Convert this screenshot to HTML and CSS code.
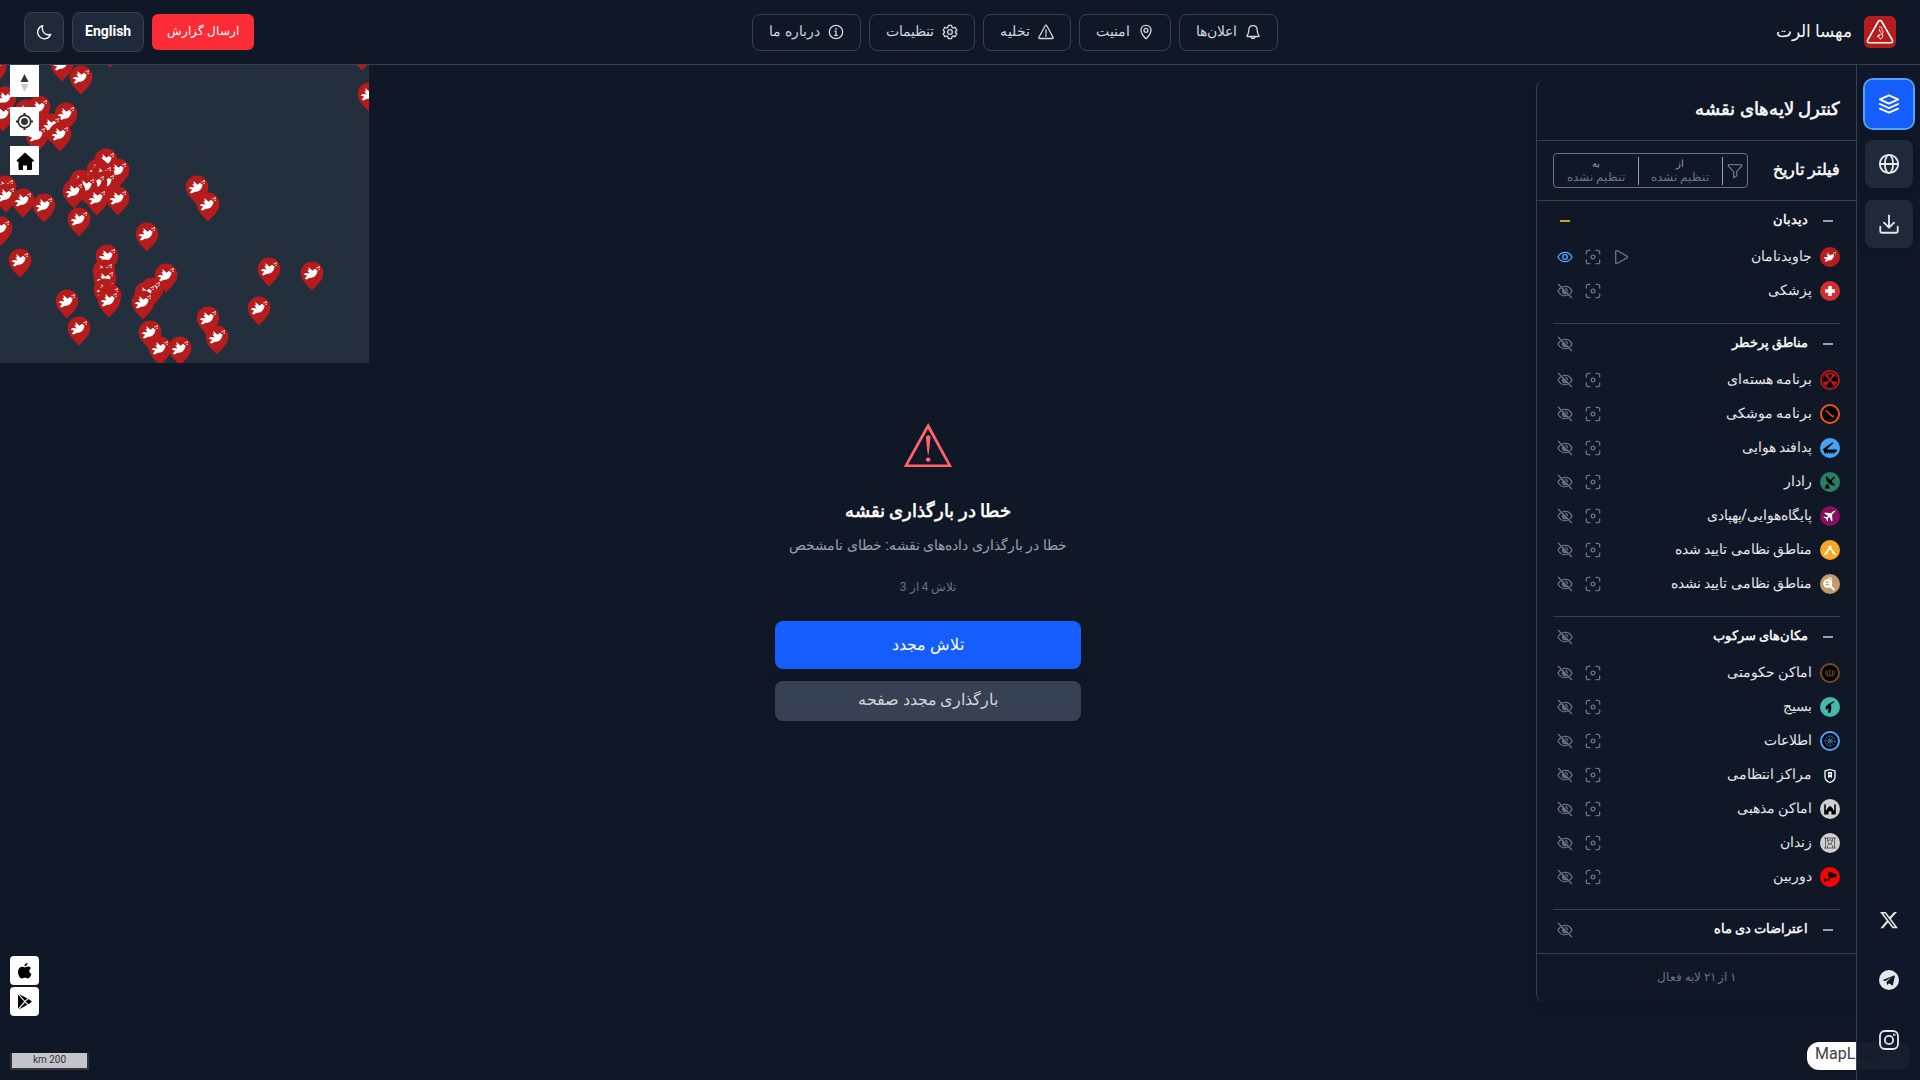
FILE: index.html
```html
<!DOCTYPE html>
<html lang="fa" dir="rtl">
<head>
<meta charset="utf-8">
<meta name="viewport" content="width=device-width, initial-scale=1">
<title>مهسا الرت</title>
<link rel="stylesheet" href="styles.css">
</head>
<body>
<svg class="sprite" aria-hidden="true">
  <symbol id="bell" viewBox="0 0 24 24"><path d="M12 2.500c-4 0-6.300 3-6.300 7 0 5-1.500 6-2.700 7.800-.5.700 0 1.400.8 1.400h16.400c.8 0 1.300-.7.8-1.400C19.800 15.500 18.300 14.500 18.300 9.500c0-4-2.300-7-6.300-7zM9 19c0 3.300 6 3.300 6 0"/></symbol>
  <symbol id="pin" viewBox="0 0 24 24"><path d="M12 2C7.500 2 4.500 5.200 4.500 9.200c0 5.300 5 10 6.700 12.400.4.500 1.200.5 1.600 0 1.700-2.400 6.700-7.100 6.700-12.400C19.500 5.200 16.500 2 12 2z"/><circle cx="12" cy="9.500" r="3"/></symbol>
  <symbol id="alert" viewBox="0 0 24 24"><path d="M10.800 2.600 1.400 19.800c-.5.900.1 2 1.200 2h18.800c1.100 0 1.700-1.100 1.200-2L13.200 2.600c-.5-1-1.900-1-2.400 0zM12 9v6M12 17v1.500"/></symbol>
  <symbol id="gear" viewBox="0 0 24 24"><path d="M9.600 2h4.800l.7 3 1.700 1 3-.9 2.500 4.300-2.300 2.300v.6l2.300 2.300-2.500 4.300-3-.9-1.700 1-.7 3H9.600l-.7-3-1.700-1-3 .9-2.500-4.300L4 12.300v-.6L1.700 9.400l2.500-4.300 3 .9 1.700-1z"/><circle cx="12" cy="12" r="3.500"/></symbol>
  <symbol id="info" viewBox="0 0 24 24"><circle cx="12" cy="12" r="10"/><path d="M10.500 10.800H12v6M10 17h4M12 6.700v1.200"/></symbol>
  <symbol id="moon" viewBox="0 0 24 24"><path d="M10 2.500A10 10 0 1 0 22 15.500C15 18 7.500 12.500 10 2.500z"/></symbol>
  <symbol id="layers" viewBox="0 0 24 24"><path d="m12 2.500 10 4.500-10 4.500L2 7zM2 12l10 4.500L22 12M2 17l10 4.500L22 17"/></symbol>
  <symbol id="globe" viewBox="0 0 24 24"><circle cx="12" cy="12" r="10"/><ellipse cx="12" cy="12" rx="4.500" ry="10"/><path d="M2 12h20"/></symbol>
  <symbol id="download" viewBox="0 0 24 24"><path d="M2.500 15v4.500a2 2 0 0 0 2 2h15a2 2 0 0 0 2-2V15M12 2.500v13M6.500 10.500l5.500 5.500 5.500-5.500"/></symbol>
  <symbol id="funnel" viewBox="0 0 24 24"><path d="M2 2.500h20v2l-7.500 8.500v6.500l-4.500 2.500v-9L2 4.500z"/></symbol>
  <symbol id="minus" viewBox="0 0 24 24"><path d="M4.500 12h15"/></symbol>
  <symbol id="eye" viewBox="0 0 24 24"><path d="M1.500 12c2.300-4.600 6-7 10.500-7s8.200 2.400 10.500 7c-2.300 4.600-6 7-10.500 7s-8.200-2.400-10.500-7z"/><circle cx="12" cy="12" r="3.500"/></symbol>
  <symbol id="eyeoff" viewBox="0 0 24 24"><path d="m2 2 20 20M9 5.400C15 4 20 6.500 22.500 12c-.8 1.600-1.700 3-2.900 4.100M6.300 7C4.200 8.200 2.600 10 1.500 12c3 6.300 9 8.500 15 6M8.500 10.500c-1.200 3.500 1.800 6.500 5.200 5.200zM13 8.300a4 4 0 0 1 2.800 3"/></symbol>
  <symbol id="focus" viewBox="0 0 24 24"><path d="M2 7.500V5a3 3 0 0 1 3-3h2.500M16.500 2H19a3 3 0 0 1 3 3v2.500M22 16.500V19a3 3 0 0 1-3 3h-2.500M7.500 22H5a3 3 0 0 1-3-3v-2.500"/><circle cx="12" cy="12" r="2.800"/></symbol>
  <symbol id="play" viewBox="0 0 24 24"><path d="M4 3.500v17c0 1.200 1 1.700 2 1.200l15-8.500c1-.6 1-1.800 0-2.400L6 2.300c-1-.5-2 0-2 1.200z"/></symbol>
  <g id="dove"><path fill="#fff" d="M2 14.500c1-1.700 2.500-2.300 4-2l3.500.5L6.500 9l2.200.5L8 5l5.200 4.800 3-2.500 1.800 1.500 1.500.5c-.8 5-3.500 8.700-8 9.200l-1.500 0-4.500 2-2-1 3-3.500c-1.500-.5-3-1-4.500-1.500zM18 5.200h1.800v1.300H18zM20.500 4h1.800v1.800h-1.800zM20.500 7.300h1.800v1.200h-1.800z"/></g>
  <g id="marker"><path fill="#b71c1c" d="M12 .5A11.300 11.300 0 0 0 .7 12C.7 19 7 24 12 29.500 17 24 23.300 19 23.300 12A11.300 11.300 0 0 0 12 .5z"/><use href="#dove" transform="translate(2 2) scale(.8)"/></g>
</svg>

<header class="topbar">
  <a class="brand" href="#">
    <svg class="logo" viewBox="0 0 32 32"><rect width="32" height="32" rx="6" fill="#b71c1c"/><path d="M14.300 5.500 3.700 24c-.8 1.500 0 2.800 1.500 2.800h21.600c1.500 0 2.300-1.300 1.500-2.800L17.700 5.500c-.8-1.400-2.600-1.400-3.400 0z" fill="none" stroke="#fff" stroke-width="1.600"/><path d="M15 11c2.500-.5 4 1 2.500 2.500 2.500 2 1.500 4-1 5s-2 3.500 0 4.500c2-1 3-3.500 1.500-6M15 13l1.500 3.500M13 21l2.500-3" fill="none" stroke="#fff" stroke-width="1"/></svg>
    <span>مهسا الرت</span>
  </a>
  <nav class="menu">
    <button class="menu-btn"><svg class="ico"><use href="#bell"/></svg><span>اعلان‌ها</span></button>
    <button class="menu-btn"><svg class="ico"><use href="#pin"/></svg><span>امنیت</span></button>
    <button class="menu-btn"><svg class="ico"><use href="#alert"/></svg><span>تخلیه</span></button>
    <button class="menu-btn"><svg class="ico"><use href="#gear"/></svg><span>تنظیمات</span></button>
    <button class="menu-btn"><svg class="ico"><use href="#info"/></svg><span>درباره ما</span></button>
  </nav>
  <div class="actions">
    <button class="report">ارسال گزارش</button>
    <button class="lang" lang="en">English</button>
    <button class="theme" aria-label="حالت تاریک"><svg class="ico"><use href="#moon"/></svg></button>
  </div>
</header>

<main class="layout">
  <aside class="rail">
    <button class="rail-btn active" aria-label="لایه‌ها"><svg class="ico"><use href="#layers"/></svg></button>
    <button class="rail-btn" aria-label="نقشه پایه"><svg class="ico"><use href="#globe"/></svg></button>
    <button class="rail-btn" aria-label="دانلود"><svg class="ico"><use href="#download"/></svg></button>
    <div class="social">
      <a href="#" aria-label="X"><svg viewBox="0 0 24 24"><path fill="currentColor" d="M18.200 2.300h3.400l-7.300 8.300 8.500 11.300h-6.700l-5.200-6.900-6 6.900H1.600l7.700-8.900L1.200 2.300H8l4.700 6.200zm-1.200 17.600h1.900L7.100 4.100h-2z"/></svg></a>
      <a href="#" aria-label="Telegram"><svg viewBox="0 0 24 24"><circle cx="12" cy="12" r="12" fill="currentColor"/><path fill="#101828" d="M4.500 12 18 6.500c.7-.2 1.200.2 1 1.200l-2.200 10.100c-.2.800-.7 1-1.300.6L12 15.900l-1.700 1.700c-.4.400-.7.300-.8-.3l-.4-3.200 6.400-5.800-7.900 5-3-.9c-.8-.2-.7-.8-.1-.4z"/></svg></a>
      <a href="#" aria-label="Instagram"><svg viewBox="0 0 24 24" fill="none" stroke="currentColor" stroke-width="2.200"><rect x="1.200" y="1.200" width="21.600" height="21.600" rx="6"/><circle cx="12" cy="12" r="5"/><circle cx="18.300" cy="5.700" r=".5"/></svg></a>
    </div>
  </aside>

  <section class="stage">
    <svg class="map" viewBox="0 0 369 298" aria-hidden="true">
      <rect width="369" height="298" fill="#242f3d"/>
      <use href="#marker" x="-17" y="-10"/><use href="#marker" x="50" y="-13"/><use href="#marker" x="98" y="-27"/><use href="#marker" x="350" y="-24"/><use href="#marker" x="357" y="17"/><use href="#marker" x="69" y="0"/>
      <use href="#marker" x="-7" y="21"/><use href="#marker" x="14" y="34"/><use href="#marker" x="-9" y="37"/><use href="#marker" x="27" y="30"/><use href="#marker" x="54" y="37"/><use href="#marker" x="39" y="48"/><use href="#marker" x="25" y="58"/><use href="#marker" x="48" y="57"/>
      <use href="#marker" x="94" y="83"/><use href="#marker" x="86" y="93"/><use href="#marker" x="106" y="93"/><use href="#marker" x="91" y="97"/><use href="#marker" x="69" y="104"/><use href="#marker" x="94" y="105"/><use href="#marker" x="84" y="106"/><use href="#marker" x="74" y="109"/><use href="#marker" x="62" y="114"/><use href="#marker" x="85" y="121"/><use href="#marker" x="106" y="121"/>
      <use href="#marker" x="-7" y="110"/><use href="#marker" x="-6" y="118"/><use href="#marker" x="11" y="123"/><use href="#marker" x="32" y="128"/><use href="#marker" x="67" y="142"/><use href="#marker" x="-11" y="151"/><use href="#marker" x="8" y="183"/>
      <use href="#marker" x="185" y="110"/><use href="#marker" x="196" y="127"/><use href="#marker" x="135" y="157"/>
      <use href="#marker" x="95" y="179"/><use href="#marker" x="92" y="194"/><use href="#marker" x="93" y="202"/><use href="#marker" x="93" y="213"/><use href="#marker" x="98" y="218"/><use href="#marker" x="97" y="223"/>
      <use href="#marker" x="154" y="198"/><use href="#marker" x="140" y="212"/><use href="#marker" x="134" y="216"/><use href="#marker" x="131" y="225"/><use href="#marker" x="55" y="224"/><use href="#marker" x="67" y="251"/>
      <use href="#marker" x="138" y="255"/><use href="#marker" x="148" y="271"/><use href="#marker" x="168" y="271"/><use href="#marker" x="196" y="241"/><use href="#marker" x="205" y="260"/><use href="#marker" x="247" y="231"/><use href="#marker" x="257" y="192"/><use href="#marker" x="300" y="196"/>
    </svg>

    <div class="controls">
      <button class="ctl ctl-compass" aria-label="شمال"><svg viewBox="0 0 29 29"><path fill="#333" d="m10.500 14 4-8 4 8z"/><path fill="#ccc" d="m10.500 16 4 8 4-8z"/></svg></button>
      <button class="ctl" aria-label="موقعیت من"><svg viewBox="0 0 29 29"><g fill="none" stroke="#333"><circle cx="14.500" cy="14.500" r="6.200" stroke-width="1.800"/><path stroke-width="2.200" d="M14.500 6v3M14.500 20v3M6 14.500h3M20 14.500h3"/></g><circle cx="14.500" cy="14.500" r="3.500" fill="#333"/></svg></button>
      <button class="ctl" aria-label="خانه"><svg viewBox="0 0 29 29"><path d="m15 6.500 9 8-1 1.300h-1V23a1 1 0 0 1-1 1h-4v-4.500h-4V24H9.500a1 1 0 0 1-1-1v-7.200h-1L6.500 14.500z"/></svg></button>
    </div>

    <div class="apps">
      <a href="#" class="ctl" aria-label="App Store"><svg viewBox="0 0 29 29"><path d="M17.500 7c.2 1.700-1.300 3.400-3 3.300-.2-1.600 1.400-3.200 3-3.300zM14.800 11.500c.7 0 1.800-1 3.400-.9 1.200 0 2.200.6 2.800 1.500-2.500 1.600-2 4.900.5 5.900-.6 1.900-2 4.500-3.600 4.500-1.200 0-1.700-.7-3-.7s-1.900.7-3 .7C9.800 22.500 8 18.800 8 16c0-3.200 2-5.200 4.100-5.200 1.200 0 2.200.7 2.700.7z"/></svg></a>
      <a href="#" class="ctl" aria-label="Google Play"><svg viewBox="0 0 29 29"><path d="m8 7.500 6.200 7L8 21.800zM9 7l8.500 4.500-2.600 2.300zM9 22.500l5.900-7 2.600 2.300zM18.500 12l3.500 2.600-3.500 2.700-3-2.700z"/></svg></a>
    </div>

    <div class="scale" dir="rtl">200 km</div>
    <div class="credit" dir="ltr">MapLibre</div>

    <div class="error" role="alert">
      <div class="error-icon">⚠</div>
      <h2>خطا در بارگذاری نقشه</h2>
      <p class="error-msg">خطا در بارگذاری داده‌های نقشه: خطای نامشخص</p>
      <p class="error-try">تلاش 4 از 3</p>
      <button class="retry">تلاش مجدد</button>
      <button class="reload">بارگذاری مجدد صفحه</button>
    </div>

    <section class="panel">
      <h2 class="panel-title">کنترل لایه‌های نقشه</h2>
      <div class="filter">
        <h3>فیلتر تاریخ</h3>
        <div class="range">
          <button class="range-icon" aria-label="فیلتر"><svg class="ico"><use href="#funnel"/></svg></button>
          <button class="range-date"><small>از</small><span>تنظیم نشده</span></button>
          <button class="range-date"><small>به</small><span>تنظیم نشده</span></button>
        </div>
      </div>

      <div class="list">
        <section class="group">
          <div class="group-head"><button class="tool" aria-label="بستن"><svg class="ico"><use href="#minus"/></svg></button><h3>دیدبان</h3><button class="tool partial" aria-label="نمایش"><svg class="ico"><use href="#minus"/></svg></button></div>
          <div class="row"><svg class="badge" viewBox="0 0 20 20"><circle cx="10" cy="10" r="10" fill="#b71c1c"/><use href="#dove" transform="translate(2.500 2.500) scale(.6)"/></svg><span>جاویدنامان</span><button class="tool" aria-label="پخش"><svg class="ico"><use href="#play"/></svg></button><button class="tool" aria-label="تمرکز"><svg class="ico"><use href="#focus"/></svg></button><button class="tool on" aria-label="نمایش"><svg class="ico"><use href="#eye"/></svg></button></div>
          <div class="row"><svg class="badge" viewBox="0 0 20 20"><circle cx="10" cy="10" r="10" fill="#d32f2f"/><path stroke="#fff" stroke-width="3.600" d="M10 5v10M5 10h10"/></svg><span>پزشکی</span><button class="tool" aria-label="تمرکز"><svg class="ico"><use href="#focus"/></svg></button><button class="tool" aria-label="نمایش"><svg class="ico"><use href="#eyeoff"/></svg></button></div>
        </section>

        <section class="group">
          <div class="group-head"><button class="tool" aria-label="بستن"><svg class="ico"><use href="#minus"/></svg></button><h3>مناطق پرخطر</h3><button class="tool" aria-label="نمایش"><svg class="ico"><use href="#eyeoff"/></svg></button></div>
          <div class="row"><svg class="badge" viewBox="0 0 20 20"><circle cx="10" cy="10" r="10" fill="#b71c1c"/><circle cx="10" cy="10" r="7.800" fill="none" stroke="#000" stroke-width=".8"/><path d="M8.600 9.200 4.600 5.600A7 7 0 0 0 3.500 12l5-1.200zM11.400 9.200l4-3.600a7 7 0 0 1 1.100 6.400l-5-1.200zM9.200 11.400 6.500 16a7 7 0 0 0 7 0l-2.700-4.600zM8 4.500l1.200 3.500h1.600L12 4.500z"/></svg><span>برنامه هسته‌ای</span><button class="tool" aria-label="تمرکز"><svg class="ico"><use href="#focus"/></svg></button><button class="tool" aria-label="نمایش"><svg class="ico"><use href="#eyeoff"/></svg></button></div>
          <div class="row"><svg class="badge" viewBox="0 0 20 20"><circle cx="10" cy="10" r="9" stroke="#f4511e" stroke-width="2"/><path stroke="#f4511e" stroke-width="1.400" d="m6 6.500 7 6.500M12 13.300l1.800-1.800"/></svg><span>برنامه موشکی</span><button class="tool" aria-label="تمرکز"><svg class="ico"><use href="#focus"/></svg></button><button class="tool" aria-label="نمایش"><svg class="ico"><use href="#eyeoff"/></svg></button></div>
          <div class="row"><svg class="badge" viewBox="0 0 20 20"><circle cx="10" cy="10" r="10" fill="#42a5f5"/><path d="m3 11 9.500-6.800.8 1L6.500 11.500H17l-.6 2.500H4z"/><path stroke="#000" stroke-dasharray="1.500 .7" stroke-width="1.600" d="M4.500 14.800h11"/></svg><span>پدافند هوایی</span><button class="tool" aria-label="تمرکز"><svg class="ico"><use href="#focus"/></svg></button><button class="tool" aria-label="نمایش"><svg class="ico"><use href="#eyeoff"/></svg></button></div>
          <div class="row"><svg class="badge" viewBox="0 0 20 20"><circle cx="10" cy="10" r="10" fill="#2a7f62"/><path d="M6.500 4c-2 4 3.500 10.500 9 9.500L11.500 9.300 15 5.200l-1-.8-3.700 3.700zM6.500 12 4.500 16.500h5L9 13z"/></svg><span>رادار</span><button class="tool" aria-label="تمرکز"><svg class="ico"><use href="#focus"/></svg></button><button class="tool" aria-label="نمایش"><svg class="ico"><use href="#eyeoff"/></svg></button></div>
          <div class="row"><svg class="badge" viewBox="0 0 20 20"><circle cx="10" cy="10" r="10" fill="#880e5f"/><path fill="#fff" d="M16 4.200 13 5.500 11 7.300 5 6.500 4.300 7.500 8 9.700l-1 1.200-3-.2-.6.8 2.800 1 .9 2.800.9-.5V12l1.500-1 2 4.500 1-.8-.5-6 1.800-2z"/></svg><span>پایگاه‌هوایی/پهپادی</span><button class="tool" aria-label="تمرکز"><svg class="ico"><use href="#focus"/></svg></button><button class="tool" aria-label="نمایش"><svg class="ico"><use href="#eyeoff"/></svg></button></div>
          <div class="row"><svg class="badge" viewBox="0 0 20 20"><circle cx="10" cy="10" r="10" fill="#f9a825"/><path fill="none" stroke="#fff" stroke-width="1.500" d="M4.500 14.800 11.500 6M15.500 14.800 8.500 6M6.500 12.300l1.300 1.200M13.500 12.300l-1.300 1.200"/></svg><span>مناطق نظامی تایید شده</span><button class="tool" aria-label="تمرکز"><svg class="ico"><use href="#focus"/></svg></button><button class="tool" aria-label="نمایش"><svg class="ico"><use href="#eyeoff"/></svg></button></div>
          <div class="row"><svg class="badge" viewBox="0 0 20 20"><circle cx="10" cy="10" r="10" fill="#c49a6c"/><circle cx="7.800" cy="9.500" r="4.500" fill="#fff"/><circle cx="10" cy="5.300" r="1.700" fill="none" stroke="#fff"/><path stroke="#fff" stroke-width="2" d="m10.500 12 3.800 4"/><path stroke="#c49a6c" stroke-width=".7" d="M5 8h5M5 10.500h5M7 7v5"/></svg><span>مناطق نظامی تایید نشده</span><button class="tool" aria-label="تمرکز"><svg class="ico"><use href="#focus"/></svg></button><button class="tool" aria-label="نمایش"><svg class="ico"><use href="#eyeoff"/></svg></button></div>
        </section>

        <section class="group">
          <div class="group-head"><button class="tool" aria-label="بستن"><svg class="ico"><use href="#minus"/></svg></button><h3>مکان‌های سرکوب</h3><button class="tool" aria-label="نمایش"><svg class="ico"><use href="#eyeoff"/></svg></button></div>
          <div class="row"><svg class="badge" viewBox="0 0 20 20"><circle cx="10" cy="10" r="9" stroke="#7b4a1e" stroke-width="2"/><path fill="none" stroke="#8d5524" stroke-width=".9" d="M10 6v8M8 7c-1.200 2-1 4.500.8 6M12 7c1.200 2 1 4.500-.8 6M6 7.500c-1 2.500 0 5 2 6M14 7.500c1 2.500 0 5-2 6"/></svg><span>اماکن حکومتی</span><button class="tool" aria-label="تمرکز"><svg class="ico"><use href="#focus"/></svg></button><button class="tool" aria-label="نمایش"><svg class="ico"><use href="#eyeoff"/></svg></button></div>
          <div class="row"><svg class="badge" viewBox="0 0 20 20"><circle cx="10" cy="10" r="10" fill="#45b8ac"/><path d="m5.500 10 3-3 5.500-3 .5.800-3.800 3 .8 3-1 5H8l.5-4.500L6 13z"/></svg><span>بسیج</span><button class="tool" aria-label="تمرکز"><svg class="ico"><use href="#focus"/></svg></button><button class="tool" aria-label="نمایش"><svg class="ico"><use href="#eyeoff"/></svg></button></div>
          <div class="row"><svg class="badge" viewBox="0 0 20 20"><circle cx="10" cy="10" r="9" stroke="#4da3ff" stroke-width="2"/><g fill="none" stroke="#2f6fb5"><circle cx="10" cy="10" r="5" stroke-dasharray="2 1"/><circle cx="10" cy="10" r="2"/><path d="M10 4v12M4 10h12M6 6l8 8M14 6l-8 8" stroke-width=".8"/></g></svg><span>اطلاعات</span><button class="tool" aria-label="تمرکز"><svg class="ico"><use href="#focus"/></svg></button><button class="tool" aria-label="نمایش"><svg class="ico"><use href="#eyeoff"/></svg></button></div>
          <div class="row"><svg class="badge" viewBox="0 0 20 20"><circle cx="10" cy="10" r="10" fill="#0d1b2a"/><path fill="none" stroke="#fff" stroke-width="1.300" d="M10 4.500 15 6v6c0 2.500-2.500 4.500-5 5.500-2.500-1-5-3-5-5.500V6z"/><path fill="#fff" d="M8 7h4v6l-2-1-2 1z"/><circle cx="10" cy="9.300" r=".8" fill="#0d1b2a"/></svg><span>مراکز انتظامی</span><button class="tool" aria-label="تمرکز"><svg class="ico"><use href="#focus"/></svg></button><button class="tool" aria-label="نمایش"><svg class="ico"><use href="#eyeoff"/></svg></button></div>
          <div class="row"><svg class="badge" viewBox="0 0 20 20"><circle cx="10" cy="10" r="10" fill="#d0d0d0"/><path d="M4.200 15.500V6.200l.8-1.700.8 1.700V11h1c0-2 1.700-3 3.200-4 1.500 1 3.200 2 3.200 4h1V6.200l.8-1.700.8 1.700v9.300h-4.300v-2a1.500 1.500 0 0 0-3 0v2z"/></svg><span>اماکن مذهبی</span><button class="tool" aria-label="تمرکز"><svg class="ico"><use href="#focus"/></svg></button><button class="tool" aria-label="نمایش"><svg class="ico"><use href="#eyeoff"/></svg></button></div>
          <div class="row"><svg class="badge" viewBox="0 0 20 20"><circle cx="10" cy="10" r="10" fill="#d0d0d0"/><g fill="none" stroke="#555" stroke-width=".9"><path d="M4 5h12M4 15h12M5.500 5v10M14.500 5v10M7.500 15v-2.500l1.500-1.500h2l1.500 1.500V15"/><circle cx="10" cy="8.800" r="2"/><path d="M7.500 5v3M12.500 5v3"/></g></svg><span>زندان</span><button class="tool" aria-label="تمرکز"><svg class="ico"><use href="#focus"/></svg></button><button class="tool" aria-label="نمایش"><svg class="ico"><use href="#eyeoff"/></svg></button></div>
          <div class="row"><svg class="badge" viewBox="0 0 20 20"><circle cx="10" cy="10" r="10" fill="red"/><path d="m9 4.500 8 3-1 3-2.500-.5-1 1.200L7.500 9zM4.200 11h1v1.200h3L9 10l1.500.5-1 3.200H5.200V15h-1z"/></svg><span>دوربین</span><button class="tool" aria-label="تمرکز"><svg class="ico"><use href="#focus"/></svg></button><button class="tool" aria-label="نمایش"><svg class="ico"><use href="#eyeoff"/></svg></button></div>
        </section>

        <section class="group">
          <div class="group-head"><button class="tool" aria-label="بستن"><svg class="ico"><use href="#minus"/></svg></button><h3>اعتراضات دی ماه</h3><button class="tool" aria-label="نمایش"><svg class="ico"><use href="#eyeoff"/></svg></button></div>
        </section>
      </div>
      <p class="summary">۱ از ۲۱ لایه فعال</p>
    </section>
  </section>
</main>
</body>
</html>
```
FILE: styles.css
```css
* { box-sizing: border-box; margin: 0; }
body {
  min-height: 100vh;
  display: flex;
  flex-direction: column;
  background: #101828;
  color: #f3f4f6;
  font-family: Roboto, sans-serif;
  font-size: 14px;
  line-height: 20px;
}
button { font: inherit; color: inherit; background: none; border: 0; padding: 0; cursor: pointer; }
a { color: inherit; text-decoration: none; }
.sprite { display: none; }
.ico { width: 16px; height: 16px; fill: none; stroke: currentColor; stroke-width: 2; stroke-linecap: round; stroke-linejoin: round; flex: none; }

.topbar {
  display: flex;
  justify-content: space-between;
  align-items: center;
  height: 65px;
  padding: 0 24px;
  border-bottom: 1px solid #364153;
}
.brand { display: flex; align-items: center; gap: 12px; font-size: 17px; line-height: 28px; font-weight: 300; }
.brand span, .menu-btn span { padding-bottom: 2px; }
.logo { width: 32px; height: 32px; }
.menu { display: flex; gap: 8px; }
.menu-btn {
  display: flex;
  align-items: center;
  gap: 8px;
  height: 37px;
  padding: 0 16px;
  border: 1px solid #364153;
  border-radius: 8px;
  color: #d1d5dc;
  font-weight: 500;
}
.actions { display: flex; align-items: center; justify-content: flex-end; gap: 8px; }
.report { height: 36px; padding: 0 15px 2px; border-radius: 6px; background: #fb2c36; color: #fff; font-size: 12px; }
.lang, .theme { height: 40px; border: 1px solid #364153; border-radius: 8px; background: #1e2939; color: #fff; }
.lang { padding: 0 12px 2px; font-weight: 700; }
.theme { display: grid; place-items: center; width: 40px; }

.layout { flex: 1; display: flex; }
.rail {
  z-index: 2;
  display: flex;
  flex-direction: column;
  align-items: center;
  gap: 12px;
  width: 64px;
  padding: 15px 0 16px;
  border-left: 1px solid #364153;
  background: rgba(16, 24, 40, .97);
}
.rail-btn { display: grid; place-items: center; width: 48px; height: 48px; border-radius: 8px; background: #1e2939; color: #e5e7eb; box-shadow: 0 4px 8px rgba(0, 0, 0, .15); }
.rail-btn .ico { width: 22px; height: 22px; }
.rail-btn.active { background: #155dfc; color: #fff; outline: 2px solid #51a2ff; }
.social { margin-top: auto; display: flex; flex-direction: column; gap: 12px; color: #e5e7eb; }
.social a { display: grid; place-items: center; width: 48px; height: 48px; }
.social svg { width: 20px; height: 20px; }

.stage { position: relative; flex: 1; display: grid; }
.stage > * { grid-area: 1 / 1; }
.map { width: 369px; height: 298px; justify-self: end; }
.controls, .apps { z-index: 1; justify-self: end; display: flex; flex-direction: column; margin-left: 10px; }
.controls { align-self: start; gap: 10px; }
.apps { align-self: end; gap: 2px; margin-bottom: 64px; }
.ctl { display: block; width: 29px; height: 29px; background: #fff; }
.ctl svg { display: block; width: 29px; height: 29px; }
.ctl-compass { height: 32px; padding-top: 3px; }
.apps .ctl { border-radius: 4px; }
.scale {
  align-self: end;
  justify-self: end;
  width: 79px;
  height: 17px;
  margin: 0 0 10px 10px;
  border: 2px solid #333;
  border-top: 0;
  background: #c4c5ca;
  color: #333;
  font-size: 10px;
  line-height: 13px;
  text-align: center;
}
.credit {
  position: absolute;
  right: -54px;
  bottom: 10px;
  width: 103px;
  height: 28px;
  padding: 0 8px;
  border-radius: 12px;
  background: #fff;
  color: #404040;
  font-size: 16px;
  line-height: 24px;
}

.error { align-self: center; justify-self: center; display: flex; flex-direction: column; width: 306px; text-align: center; }
.error-icon { margin-bottom: 29px; color: #ff6467; font: 60px/44px "DejaVu Sans", sans-serif; }
.error h2 { font-size: 18px; line-height: 28px; font-weight: 700; color: #fff; }
.error-msg { margin-top: 10px; color: #99a1af; white-space: nowrap; }
.error-try { margin: 24px 0 26px; color: #6a7282; font-size: 12px; line-height: 16px; }
.error button { border-radius: 8px; font-size: 16px; }
.retry { height: 48px; background: #155dfc; color: #fff; font-weight: 500; box-shadow: 0 8px 12px rgba(0, 0, 0, .15); }
.error .reload { height: 40px; margin-top: 12px; padding-bottom: 2px; background: #364153; color: #d1d5dc; }

.panel {
  z-index: 1;
  align-self: start;
  justify-self: start;
  width: 320px;
  margin: 15px 0;
  border-left: 1px solid #364153;
  border-radius: 8px 0 0 8px;
  background: #101828;
  box-shadow: 0 8px 12px rgba(0, 0, 0, .12);
}
.panel-title { height: 61px; padding: 0 16px; border-bottom: 1px solid #364153; font-size: 18px; line-height: 58px; font-weight: 700; }
.filter { display: flex; align-items: center; justify-content: space-between; height: 60px; padding: 0 16px; border-bottom: 1px solid #364153; }
.filter h3 { padding-bottom: 2px; font-size: 16px; line-height: 24px; font-weight: 700; }
.range { display: flex; align-items: center; width: 195px; height: 35px; border: 1px solid #6a7282; border-radius: 4px; color: #6a7282; }
.range-icon { display: grid; place-items: center; width: 24px; height: 28px; }
.range-date { flex: 1; height: 28px; border-right: 1px solid #99a1af; line-height: 14px; }
.range-date small, .range-date span { display: block; font-size: 12px; }
.range-date small { font-size: 10px; line-height: 12px; color: #99a1af; }

.list { padding: 0 16px 4px; }
.group + .group { margin-top: 15px; border-top: 1px solid #364153; }
.group-head, .row { display: flex; align-items: center; gap: 4px; }
.group-head { height: 39px; }
.group-head h3 { flex: 1; margin-right: 4px; padding-bottom: 2px; color: #f3f4f6; font-size: 13px; line-height: 20px; font-weight: 700; }
.row { height: 34px; }
.row span { flex: 1; margin-right: 4px; padding-bottom: 2px; color: #e5e7eb; font-weight: 500; }
.badge { width: 20px; height: 20px; fill: #000; }
.tool { display: grid; place-items: center; width: 24px; height: 24px; color: #6a7282; }
.group-head .tool:first-child { color: #99a1af; }
.tool.partial { color: #d0a215; }
.tool.on { color: #51a2ff; }
.group-head .tool:first-child .ico, .tool.partial .ico { stroke-width: 3; stroke-linecap: butt; }
.summary { height: 49px; border-top: 1px solid #364153; color: #6a7282; font-size: 12px; line-height: 46px; text-align: center; }
```
